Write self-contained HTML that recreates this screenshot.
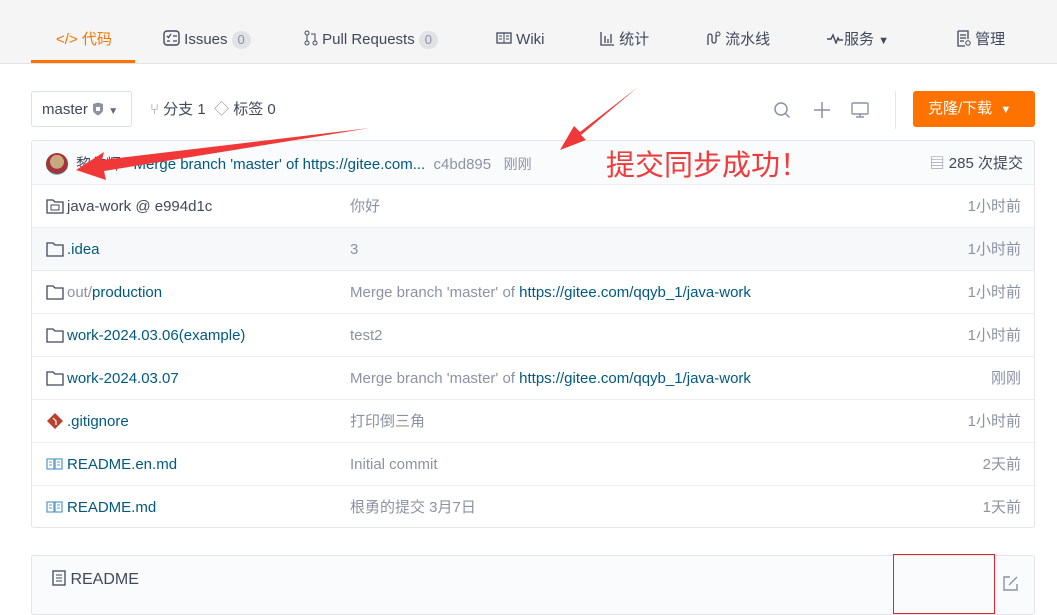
<!DOCTYPE html>
<html><head><meta charset="utf-8"><style>
*{box-sizing:border-box;margin:0;padding:0}
body{width:1057px;height:603px;overflow:hidden;background:#fff;font-family:"Liberation Sans","Noto Sans CJK SC",sans-serif;font-size:15px;line-height:20px;color:#40485b;position:relative}
.nav{position:absolute;left:0;top:0;width:1057px;height:64px;background:#f5f5f5;border-bottom:1px solid #e3e3e3}
.nav .it{position:absolute;top:30px;font-size:15px;color:#40485b;white-space:nowrap;line-height:20px}
.badge{display:inline-block;background:#e0e2e6;color:#8c92a4;border-radius:9px;padding:0 6px;font-size:13px;line-height:18px;margin-left:4px}
.ul{position:absolute;left:31px;top:60px;width:104px;height:3px;background:#fe7300}
.a{position:absolute;white-space:nowrap;line-height:20px}
.box{position:absolute;left:31px;top:140px;width:1004px;height:388px;border:1px solid #e3e5ea;border-radius:3px}
.row{position:absolute;left:0;width:1002px;height:43px;border-top:1px solid #eceef1}
.row span.n,.row span.m,.row span.t{position:absolute;top:12px;line-height:20px;white-space:nowrap}
.row .n{left:35px;color:#005980}
.row .m{left:318px;color:#8c92a4}
.row .t{right:13px;color:#8c92a4}
.row svg{position:absolute;left:14px;top:14px}
.m a{color:#005980;text-decoration:none}
</style></head><body>
<div class="nav">
<div class="it" style="left:56px;color:#fe7300">&lt;/&gt; 代码</div>
<div class="it" style="left:163px"><svg width="17" height="16" style="vertical-align:-2px"><rect x="1" y="1" width="15" height="14" rx="3" fill="none" stroke="#40485b" stroke-width="1.4"/><path d="M4 6l1.5 1.5L8 4M10 6h4M4 11h3M10 11h4" stroke="#40485b" stroke-width="1.3" fill="none"/></svg> Issues<span class="badge">0</span></div>
<div class="it" style="left:304px"><svg width="14" height="16" style="vertical-align:-2px"><circle cx="3" cy="3" r="2" fill="none" stroke="#40485b"/><circle cx="3" cy="13" r="2" fill="none" stroke="#40485b"/><circle cx="11" cy="13" r="2" fill="none" stroke="#40485b"/><path d="M3 5v6M11 11V4H7" stroke="#40485b" fill="none"/></svg> Pull Requests<span class="badge">0</span></div>
<div class="it" style="left:496px"><svg width="16" height="14" style="vertical-align:-1px"><rect x="1" y="2" width="14" height="10" fill="none" stroke="#40485b" stroke-width="1.3"/><path d="M8 2v10M3 5h3M3 8h3M10 5h3M10 8h3" stroke="#40485b"/></svg> Wiki</div>
<div class="it" style="left:600px"><svg width="15" height="15" style="vertical-align:-2px"><path d="M1 1v13h13M5 5v7M8 8v4M11 3v9" stroke="#40485b" fill="none" stroke-width="1.3"/></svg> 统计</div>
<div class="it" style="left:705px"><svg width="16" height="15" style="vertical-align:-2px"><path d="M3 14V5a2 2 0 014 0v5a2 2 0 004 0V4" stroke="#40485b" fill="none" stroke-width="1.3"/><circle cx="13" cy="3" r="2" fill="none" stroke="#40485b"/></svg> 流水线</div>
<div class="it" style="left:827px"><svg width="17" height="12"><path d="M0 7h4l2-4 3 8 2-5 1 2h4" stroke="#40485b" fill="none" stroke-width="1.4"/></svg>服务 <span style="font-size:11px">▼</span></div>
<div class="it" style="left:956px"><svg width="15" height="17" style="vertical-align:-3px"><path d="M2 1h10v8M2 1v15h7M4 5h6M4 8h6M4 11h4" stroke="#40485b" fill="none" stroke-width="1.3"/><circle cx="12" cy="13" r="2.2" fill="none" stroke="#40485b"/></svg> 管理</div>
<div class="ul"></div>
</div>

<div style="position:absolute;left:31px;top:91px;width:101px;height:36px;border:1px solid #dcdfe6;border-radius:3px"></div>
<div class="a" style="left:42px;top:100px">master <svg width="12" height="14" style="vertical-align:-2px"><path d="M1 2l5-1.5L11 2v6c0 3-5 5.5-5 5.5S1 11 1 8z" fill="#8c92a4"/><rect x="4" y="5" width="4" height="4" fill="#fff"/></svg> <span style="font-size:10px;color:#606877">▼</span></div>
<div class="a" style="left:150px;top:100px"><span style="color:#8c92a4">⑂</span> 分支 1 &nbsp;<span style="color:#8c92a4">◇</span> 标签 0</div>
<svg style="position:absolute;left:773px;top:101px" width="18" height="18"><circle cx="8" cy="8" r="6" fill="none" stroke="#8c92a4" stroke-width="1.5"/><path d="M12.5 12.5l4 4" stroke="#8c92a4" stroke-width="1.5"/></svg>
<svg style="position:absolute;left:813px;top:101px" width="18" height="18"><path d="M9 1v16M1 9h16" stroke="#8c92a4" stroke-width="1.5"/></svg>
<svg style="position:absolute;left:851px;top:101px" width="18" height="18"><rect x="1" y="2" width="16" height="11" rx="1" fill="none" stroke="#8c92a4" stroke-width="1.4"/><path d="M9 13v3M5 16h8" stroke="#8c92a4" stroke-width="1.4"/></svg>
<div style="position:absolute;left:895px;top:91px;width:1px;height:38px;background:#e3e5ea"></div>
<div style="position:absolute;left:913px;top:91px;width:122px;height:36px;background:#fe7300;border-radius:3px;color:#fff;line-height:36px;padding-left:15px">克隆/下载 <span style="font-size:11px;margin-left:4px">▼</span></div>

<div class="box">
<div style="position:absolute;left:0;top:0;width:1002px;height:43px;background:#fafbfc;border-radius:3px 3px 0 0"></div>
<div style="position:absolute;left:14px;top:12px;width:22px;height:22px;border-radius:50%;background:radial-gradient(circle at 50% 40%,#c9a982 0 40%,#a3343a 41% 70%,#6ec3c9 71%)"></div>
<div class="a" style="left:44px;top:13px">黎作辉 &nbsp; <span style="color:#005980">Merge branch 'master' of https://gitee.com...</span> &nbsp;<span style="color:#8c92a4">c4bd895</span> &nbsp; <span style="color:#8c92a4;font-size:14px">刚刚</span></div>
<div class="a" style="right:11px;top:13px"><span style="color:#8c92a4">▤</span> 285 次提交</div>
<div class="row" style="top:43px"><svg width="18" height="15"><path d="M1 1h6l2 2h8v11H1z" fill="none" stroke="#40485b" stroke-width="1.3"/><path d="M5 6h8v5H5z" fill="none" stroke="#40485b"/></svg><span class="n" style="color:#40485b">java-work @ e994d1c</span><span class="m">你好</span><span class="t">1小时前</span></div>
<div class="row" style="top:86px;background:#f7f8fa"><svg width="18" height="15"><path d="M1 1h6l2 2h8v11H1z" fill="none" stroke="#40485b" stroke-width="1.3"/></svg><span class="n">.idea</span><span class="m">3</span><span class="t">1小时前</span></div>
<div class="row" style="top:129px"><svg width="18" height="15"><path d="M1 1h6l2 2h8v11H1z" fill="none" stroke="#40485b" stroke-width="1.3"/></svg><span class="n"><span style="color:#8c92a4">out/</span>production</span><span class="m">Merge branch 'master' of <a>https://gitee.com/qqyb_1/java-work</a></span><span class="t">1小时前</span></div>
<div class="row" style="top:172px"><svg width="18" height="15"><path d="M1 1h6l2 2h8v11H1z" fill="none" stroke="#40485b" stroke-width="1.3"/></svg><span class="n">work-2024.03.06(example)</span><span class="m">test2</span><span class="t">1小时前</span></div>
<div class="row" style="top:215px"><svg width="18" height="15"><path d="M1 1h6l2 2h8v11H1z" fill="none" stroke="#40485b" stroke-width="1.3"/></svg><span class="n">work-2024.03.07</span><span class="m">Merge branch 'master' of <a>https://gitee.com/qqyb_1/java-work</a></span><span class="t">刚刚</span></div>
<div class="row" style="top:258px"><svg width="18" height="16" style="top:13px"><path d="M9 0l8 8-8 8-8-8z" fill="#b8412f"/><path d="M7 5l3 3v4" stroke="#fff" stroke-width="1.2" fill="none"/></svg><span class="n">.gitignore</span><span class="m">打印倒三角</span><span class="t">1小时前</span></div>
<div class="row" style="top:301px"><svg width="18" height="14"><path d="M1 2h7v10H1zM9 2h7v10H9z" fill="none" stroke="#5d9fc8" stroke-width="1.3"/><path d="M3 5h3M3 8h3M11 5h3M11 8h3" stroke="#5d9fc8"/></svg><span class="n">README.en.md</span><span class="m">Initial commit</span><span class="t">2天前</span></div>
<div class="row" style="top:344px"><svg width="18" height="14"><path d="M1 2h7v10H1zM9 2h7v10H9z" fill="none" stroke="#5d9fc8" stroke-width="1.3"/><path d="M3 5h3M3 8h3M11 5h3M11 8h3" stroke="#5d9fc8"/></svg><span class="n">README.md</span><span class="m">根勇的提交 3月7日</span><span class="t">1天前</span></div>
</div>

<div style="position:absolute;left:31px;top:555px;width:1004px;height:60px;border:1px solid #e3e5ea;border-radius:3px;background:#fafbfc"></div>
<div class="a" style="left:52px;top:570px;font-size:16px"><svg width="14" height="16" style="vertical-align:-2px"><rect x="1" y="1" width="12" height="14" fill="none" stroke="#40485b" stroke-width="1.3"/><path d="M4 5h6M4 8h6M4 11h6" stroke="#40485b"/></svg> README</div>
<svg style="position:absolute;left:1002px;top:575px" width="17" height="17"><path d="M8 2H2v13h13V9M7 10l8-8" stroke="#8c92a4" fill="none" stroke-width="1.4"/></svg>
<div style="position:absolute;left:893px;top:554px;width:102px;height:60px;border:1.5px solid #e4242b"></div>

<div class="a" style="left:606px;top:148px;font-size:29px;line-height:36px;color:#ef3b3b">提交同步成功！</div>
<svg style="position:absolute;left:0;top:0" width="1057" height="603">
<polygon points="370,128 102,160 104,152 76,170 106,180 104,171" fill="#f03838"/>
<polygon points="638,87 580,132 574,126 560,150 586,140 581,135" fill="#f03838"/>
</svg>
</body></html>
